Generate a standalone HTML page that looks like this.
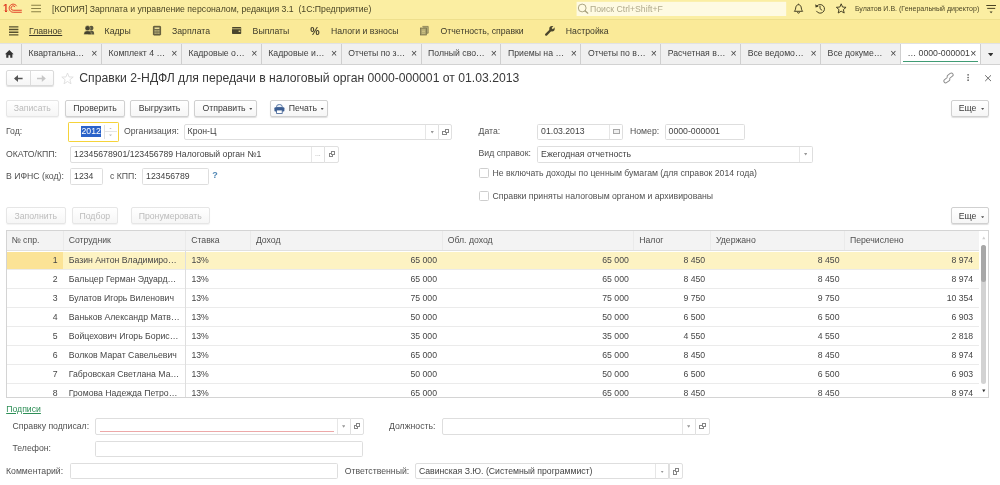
<!DOCTYPE html>
<html lang="ru"><head><meta charset="utf-8"><title>Справки 2-НДФЛ</title>
<style>
*{box-sizing:border-box;margin:0;padding:0}
html,body{width:1000px;height:485px;overflow:hidden;background:#fff}
body{will-change:transform;font-family:"Liberation Sans",Arial,sans-serif;font-size:8.7px;color:#333;position:relative;line-height:1}
.a{position:absolute;white-space:nowrap}
#top{position:absolute;left:0;top:0;width:1000px;height:19.6px;background:#fbeea2;border-bottom:1.5px solid #eedf8c}
#sec{position:absolute;left:0;top:19.6px;width:1000px;height:23.4px;background:#faea98}
#tabs{position:absolute;left:0;top:43px;width:1000px;height:21.5px;background:#f1f1f1;border-top:0.6px solid #e2e2e2;border-bottom:1px solid #d2d2d2}
.tab{position:absolute;top:0;height:20px;border-left:1px solid #cfcfcf;background:#f0f0f0}
.tab .tt{position:absolute;left:6.6px;top:5.2px;font-size:8.7px;color:#404040;white-space:nowrap}
.tab .tx{position:absolute;right:3.4px;top:4.3px;font-size:10.5px;color:#444}
.tab.act{background:#fff}
.tab.act .ul{position:absolute;left:2.2px;right:1.6px;top:17.4px;height:1.1px;background:#409b74}
.tabdiv{position:absolute;top:0;height:20px;border-left:1px solid #cfcfcf}
.st{position:absolute;top:26.7px;font-size:8.7px;color:#3d3a2a;white-space:nowrap}
.btn{position:absolute;height:16.5px;border:1px solid #d0d0d0;border-radius:2px;background:linear-gradient(#fff,#f6f6f6);box-shadow:0 1px 1px rgba(0,0,0,.13);font-size:8.7px;color:#3a3a3a;text-align:center;line-height:15.9px;white-space:nowrap}
.btn.dis{color:#bcbcbc;border-color:#e6e6e6;box-shadow:0 1px 1px rgba(0,0,0,.05)}
.lbl{position:absolute;font-size:8.7px;color:#505050;white-space:nowrap}
.inp{position:absolute;height:16.3px;border:1px solid #dedede;border-radius:1.6px;background:#fff;font-size:8.7px;color:#424242;line-height:14.3px;padding-left:3.1px;white-space:nowrap;overflow:hidden}
.inp .dd{position:absolute;right:0;top:0;bottom:0;width:12.8px;border-left:1px solid #e6e6e6}
.inp .dd:after{content:"";position:absolute;left:4.3px;top:6.3px;width:3.4px;height:2.5px;background:#979797;clip-path:polygon(0 0,100% 0,50% 100%)}
.ob{position:absolute;width:14.6px;height:16.3px;border:1px solid #e0e0e0;border-radius:0 2px 2px 0;background:#fff}
.ob:before{content:"";position:absolute;left:3.3px;top:6.2px;width:2.3px;height:2.1px;border:0.8px solid #858585;background:#fff}
.ob:after{content:"";position:absolute;left:5.5px;top:4.1px;width:2.3px;height:2.1px;border:0.8px solid #858585;background:#fff}
.cb{position:absolute;width:10px;height:10px;border:1px solid #cecece;border-radius:1.5px;background:#fff}
#tbl{position:absolute;left:6px;top:230px;width:982.9px;height:167.5px;border:1px solid #d4d4d4;background:#fff}
#clip{position:absolute;left:0;top:0;width:1000px;height:397px;overflow:hidden}
#th{position:absolute;left:7px;top:231px;width:972px;height:19.6px;background:#f3f3f3;border-bottom:1px solid #e0e0e0}
#th span{position:absolute;top:0;height:19px;border-left:1px solid #eaeaea;padding-left:4.9px;line-height:19.5px;color:#505050;font-size:8.7px;white-space:nowrap}
.row{position:absolute;left:7px;width:972px;height:18.95px;border-bottom:1px solid #ebebeb}
.row .hl{position:absolute;left:0;top:1.2px;width:972px;bottom:-0.3px;background:#fdf3c3}
.row .cur{position:absolute;left:0;top:1.2px;width:56px;bottom:-0.3px;background:#fbe396}
.c{position:absolute;top:0.2px;height:18.95px;line-height:19.4px;white-space:nowrap;color:#464646}
.c.r{text-align:right}
#vl{position:absolute;left:185px;top:251px;width:1px;height:146px;background:#dedede}
#sb{position:absolute;left:979px;top:231px;width:8.8px;height:166px;background:#fff}
#sb i{position:absolute;left:1.8px;top:13.5px;width:5.4px;height:139.5px;background:#d2d2d2;border-radius:2.7px}
#sb u{position:absolute;left:1.8px;top:13.5px;width:5.4px;height:37px;background:#a8a8a8;border-radius:2.7px}
.ar{display:inline-block;width:3.2px;height:2px;background:#555;clip-path:polygon(0 0,100% 0,50% 100%);vertical-align:0.9px;margin-left:2.2px}
.inp .dd.cal:after{clip-path:none;border:0.7px solid #a8a8a8;width:4.7px;height:3.7px;left:3.3px;top:3.9px;border-top-width:1.5px;background:#f0f0f0}
.inp .dd.dots:after{clip-path:none;background:none;width:auto;height:auto;content:"...";font-size:7px;color:#aaa;left:3px;top:0px;line-height:14px}
.inp .red{position:absolute;left:4px;right:16px;bottom:2.2px;border-bottom:1px solid #eda8a8}
.sa{position:absolute;left:2.5px;width:0;height:0;border:2px solid transparent}
.inp.r1{height:16.1px;line-height:13.5px}
.inp.r2{height:17px;line-height:15.2px}
.inp.j{border-radius:2px 0 0 2px}
.r4{height:16.9px !important}
.r6{height:15.9px !important}
.btn.t{height:17px;line-height:16.6px}

</style></head><body>
<div id="top"></div>
<div id="sec"></div>
<svg class="a" style="left:0;top:0" width="1000" height="43" viewBox="0 0 1000 43">
 <!-- logo -->
 <path d="M16.7 6.19A4.04 4.04 0 1 0 13.2 12.25H21.8" fill="none" stroke="#e03a22" stroke-width="0.95"/>
 <path d="M15.1 6.95A2.2 2.2 0 1 0 13.2 10.25H21.8" fill="none" stroke="#e03a22" stroke-width="0.95"/>
 <!-- hamburger -->
 <path d="M31.2 5.3H41M31.2 8.5H41M31.2 11.7H41" stroke="#8a8146" stroke-width="1.1"/>
 <!-- search -->
 <rect x="576.6" y="1.8" width="209.6" height="14.2" fill="#fefae2"/>
 <circle cx="582.2" cy="8" r="3.9" fill="none" stroke="#a39c78" stroke-width="0.9"/>
 <path d="M585 10.8L587.8 13.2" stroke="#a39c78" stroke-width="1.2" stroke-linecap="round"/>
 <!-- bell -->
 <path d="M794.3 11.3C795.7 10.2 795.5 8.2 795.9 6.9C796.4 5.3 797.3 4.7 798.5 4.7C799.7 4.7 800.6 5.3 801.1 6.9C801.5 8.2 801.3 10.2 802.7 11.3Z" fill="none" stroke="#3f3a20" stroke-width="0.95" stroke-linejoin="round"/>
 <path d="M797.5 12.2a1 1 0 0 0 2 0M798.5 3.7V4.7" fill="none" stroke="#3f3a20" stroke-width="0.95"/>
 <!-- history -->
 <path d="M816.9 6.1A4.3 4.3 0 1 1 816.4 10.9" fill="none" stroke="#3f3a20" stroke-width="0.95"/>
 <path d="M815.2 4.3L815.6 7.4L818.6 6.6Z" fill="#3f3a20"/>
 <path d="M820 5.8V8.6L822.2 10.4" fill="none" stroke="#3f3a20" stroke-width="0.95"/>
 <!-- star -->
 <path d="M841.20 3.80L842.55 7.04L846.05 7.32L843.39 9.61L844.20 13.03L841.20 11.20L838.20 13.03L839.01 9.61L836.35 7.32L839.85 7.04Z" fill="none" stroke="#3f3a20" stroke-width="0.95" stroke-linejoin="round"/>
 <!-- menu -->
 <path d="M986.3 5.5H996M987.2 8.4H995.2" stroke="#4a4424" stroke-width="1"/>
 <path d="M989.6 11.4H992.6L991.1 13.2Z" fill="#3f3a20"/>
 <!-- section: main -->
 <path d="M9 26.8H18.4M9 29.5H18.4M9 32.2H18.4M9 34.9H18.4" stroke="#57512f" stroke-width="1.35"/>
 <!-- people -->
 <circle cx="91.2" cy="28" r="2.3" fill="#5a563e"/>
 <path d="M88.2 34.4C88.2 31.6 89.4 30.6 91.2 30.6C93 30.6 94.2 31.6 94.2 34.4Z" fill="#5a563e"/>
 <circle cx="87.6" cy="28.2" r="2.6" fill="#45422f" stroke="#faea98" stroke-width="0.5"/>
 <path d="M83.8 34.6C83.8 31.8 85.2 30.8 87.6 30.8C90 30.8 91.4 31.8 91.4 34.6Z" fill="#45422f" stroke="#faea98" stroke-width="0.4"/>
 <!-- calculator -->
 <rect x="153.4" y="26.3" width="7.2" height="8.8" rx="0.6" fill="#6d6849" stroke="#4f4a2f" stroke-width="0.8"/>
 <rect x="154.6" y="27.5" width="4.8" height="1.5" fill="#e9dc95"/>
 <path d="M154.6 30.4H159.4M154.6 31.9H159.4M154.6 33.4H159.4" stroke="#e9dc95" stroke-width="0.8" stroke-dasharray="1.1 0.75"/>
 <!-- wallet -->
 <rect x="232" y="27" width="9.2" height="7" rx="0.7" fill="#4a452c"/>
 <rect x="232" y="28.4" width="9.2" height="0.8" fill="#d9cc85"/>
 <rect x="238.6" y="30.6" width="1.7" height="1.4" fill="#d9cc85"/>
 <!-- docs -->
 <path d="M422.4 26.4H428.2V33.2H426.6" fill="#b9b07a" stroke="#77704a" stroke-width="0.7"/>
 <rect x="420.4" y="28" width="6" height="7" fill="#a8a06c" stroke="#6f6944" stroke-width="0.7"/>
 <path d="M422 30H425M422 31.6H425M422 33.2H425" stroke="#e9dc95" stroke-width="0.6"/>
 <!-- wrench -->
 <path d="M546.2 34.6L551 29.8" stroke="#4a452c" stroke-width="2.3" stroke-linecap="round"/>
 <circle cx="552" cy="28.8" r="2.7" fill="#4a452c"/>
 <path d="M552.2 28.6L554.6 26.2" stroke="#faea98" stroke-width="1.7"/>
</svg>
 <div class="a" style="left:2.9px;top:2.8px;font-size:11.8px;font-weight:bold;color:#e03a22;line-height:1;transform:scaleX(0.82);transform-origin:0 0">1</div><div class="a" style="left:1.5px;top:10.6px;width:3.35px;height:3px;background:#fbeea2"></div><div class="a" style="left:6.9px;top:10.6px;width:1.6px;height:3px;background:#fbeea2"></div>
 <div class="a" style="left:52px;top:4.8px;font-size:8.7px;color:#4a4526">[КОПИЯ] Зарплата и управление персоналом, редакция 3.1&nbsp; (1С:Предприятие)</div>
 <div class="a" style="left:590px;top:4.6px;font-size:8.7px;color:#b0aa8c">Поиск Ctrl+Shift+F</div>
 <div class="a" style="left:854.9px;top:5.2px;font-size:7.05px;color:#4f4928">Булатов И.В. (Генеральный директор)</div>
 <div class="st" style="left:29px;text-decoration:underline">Главное</div>
 <div class="st" style="left:104.6px">Кадры</div>
 <div class="st" style="left:172px">Зарплата</div>
 <div class="st" style="left:252.6px">Выплаты</div>
 <div class="a" style="left:310.2px;top:26px;font-size:10.6px;font-weight:bold;color:#45402a">%</div>
 <div class="st" style="left:331px">Налоги и взносы</div>
 <div class="st" style="left:440.6px">Отчетность, справки</div>
 <div class="st" style="left:565.8px">Настройка</div>
<div id="tabs">
 <svg class="a" style="left:4.7px;top:6px" width="9" height="8.1" viewBox="0 0 10 9"><path d="M0 4.6L4.8 0L9.6 4.6H8.2V8.6H5.8V5.8H3.8V8.6H1.4V4.6Z" fill="#333"/></svg>
<div class="tab" style="left:21.0px;width:79.9px"><span class="tt">Квартальна…</span><span class="tx">×</span></div>
<div class="tab" style="left:100.9px;width:79.9px"><span class="tt">Комплект 4 …</span><span class="tx">×</span></div>
<div class="tab" style="left:180.8px;width:79.9px"><span class="tt">Кадровые о…</span><span class="tx">×</span></div>
<div class="tab" style="left:260.7px;width:79.9px"><span class="tt">Кадровые и…</span><span class="tx">×</span></div>
<div class="tab" style="left:340.6px;width:79.9px"><span class="tt">Отчеты по з…</span><span class="tx">×</span></div>
<div class="tab" style="left:420.5px;width:79.9px"><span class="tt">Полный сво…</span><span class="tx">×</span></div>
<div class="tab" style="left:500.4px;width:79.9px"><span class="tt">Приемы на …</span><span class="tx">×</span></div>
<div class="tab" style="left:580.3px;width:79.9px"><span class="tt">Отчеты по в…</span><span class="tx">×</span></div>
<div class="tab" style="left:660.2px;width:79.9px"><span class="tt">Расчетная в…</span><span class="tx">×</span></div>
<div class="tab" style="left:740.1px;width:79.9px"><span class="tt">Все ведомо…</span><span class="tx">×</span></div>
<div class="tab" style="left:820.0px;width:79.9px"><span class="tt">Все докуме…</span><span class="tx">×</span></div>
<div class="tab act" style="left:899.9px;width:79.9px"><span class="tt">… 0000-000001</span><span class="tx">×</span><i class="ul"></i></div>
<div class="tabdiv" style="left:979.8px"></div>
 <div class="a" style="left:988px;top:9px;width:5.4px;height:3.4px;background:#333;clip-path:polygon(0 0,100% 0,50% 100%)"></div>
</div>

<!-- form header -->
<div class="btn" style="left:6px;top:70.4px;width:47.5px;height:15.6px;border-color:#dadada"></div>
<div class="a" style="left:30px;top:71.4px;width:1px;height:13.6px;background:#dcdcdc"></div>
<svg class="a" style="left:13px;top:73.6px" width="11" height="9" viewBox="0 0 11 9"><path d="M9.6 4.5H2" stroke="#555" stroke-width="1.5"/><path d="M5 1L1 4.5L5 8Z" fill="#555"/></svg>
<svg class="a" style="left:36px;top:73.6px" width="11" height="9" viewBox="0 0 11 9"><path d="M1 4.5H8.6" stroke="#c6c6c6" stroke-width="1.5"/><path d="M5.8 1L9.8 4.5L5.8 8Z" fill="#c6c6c6"/></svg>
<svg class="a" style="left:60.5px;top:72px" width="13" height="13" viewBox="0 0 13 13"><path d="M6.5 1L8 4.9L12.2 5.1L8.9 7.7L10 11.8L6.5 9.5L3 11.8L4.1 7.7L0.8 5.1L5 4.9Z" fill="#fff" stroke="#dedede" stroke-width="0.9" stroke-linejoin="round"/></svg>
<div class="a" style="left:79.3px;top:72.1px;font-size:12.2px;color:#383838">Справки 2-НДФЛ для передачи в налоговый орган 0000-000001 от 01.03.2013</div>
<svg class="a" style="left:942px;top:72px" width="13" height="12" viewBox="942 72 13 12"><g transform="translate(948.5 77.9) rotate(-37)" fill="none" stroke="#8c8c8c" stroke-width="0.95"><path d="M1 1H4.1A1.8 1.8 0 0 0 4.1 -2.6H1.3A1.8 1.8 0 0 0 -0.5 -0.8"/><path d="M-1 -1H-4.1A1.8 1.8 0 0 0 -4.1 2.6H-1.3A1.8 1.8 0 0 0 0.5 0.8"/></g></svg>
<svg class="a" style="left:966.3px;top:73px" width="3.6" height="10" viewBox="0 0 3 10"><circle cx="1.8" cy="1.8" r="0.85" fill="#666"/><circle cx="1.8" cy="4.5" r="0.85" fill="#666"/><circle cx="1.8" cy="7.2" r="0.85" fill="#666"/></svg>
<svg class="a" style="left:984px;top:74px" width="9" height="9" viewBox="0 0 9 9"><path d="M1.2 1.3L7 7.1M7 1.3L1.2 7.1" stroke="#6a6a6a" stroke-width="1"/></svg>

<!-- command bar -->
<div class="btn dis" style="left:6px;top:100px;width:52.5px">Записать</div>
<div class="btn" style="left:65px;top:100px;width:60px">Проверить</div>
<div class="btn" style="left:129.8px;top:100px;width:59.4px">Выгрузить</div>
<div class="btn" style="left:194px;top:100px;width:63px;padding-left:4px">Отправить <b class="ar" style="margin-left:1.2px"></b></div>
<div class="btn" style="left:269.8px;top:100px;width:58.2px;padding-left:14.6px">Печать<b class="ar" style="margin-left:3.4px"></b></div>
<svg class="a" style="left:273.8px;top:103.6px" width="11" height="10" viewBox="0 0 11 10"><path d="M2.6 3.6V2.4Q2.6 0.5 5.4 0.5Q8.2 0.5 8.2 2.4V3.6Z" fill="#e8eef6" stroke="#3b5d92" stroke-width="0.8"/><rect x="0.4" y="3.2" width="10" height="4.4" rx="1" fill="#3b5d92"/><rect x="2.6" y="6" width="5.6" height="3.4" fill="#fff" stroke="#3b5d92" stroke-width="0.8"/></svg>
<div class="btn" style="left:951px;top:100px;width:38px;padding-left:3px">Еще <b class="ar"></b></div>

<!-- row 1 -->
<div class="lbl" style="left:6px;top:127.1px">Год:</div>
<div class="a" style="left:68px;top:122px;width:50.8px;height:19.8px;border:1.5px solid #f5d33a;border-radius:1.2px;background:#fff"></div>
<div class="a" style="left:81.2px;top:126px;width:19.8px;height:11.4px;background:#2a62c9"></div>
<div class="a" style="left:81.5px;top:127.2px;font-size:8.7px;color:#fff">2012</div>
<div class="a" style="left:103.5px;top:125px;width:1px;height:14px;background:#e2e2e2"></div>
<div class="a" style="left:104.5px;top:131.2px;width:12.5px;height:0.8px;background:#e4e4e4"></div>
<div class="a" style="left:109px;top:127.6px;width:3px;height:1.8px;background:#bdbdbd;clip-path:polygon(0 100%,100% 100%,50% 0)"></div>
<div class="a" style="left:109px;top:134.4px;width:3px;height:1.8px;background:#bdbdbd;clip-path:polygon(0 0,100% 0,50% 100%)"></div>
<div class="lbl" style="left:124px;top:126.9px">Организация:</div>
<div class="inp r1 j" style="left:183.5px;top:123.8px;width:255.5px">Крон-Ц<i class="dd"></i></div>
<div class="ob" style="left:438px;top:123.8px;height:16.1px;width:13.8px"></div>
<div class="lbl" style="left:478.5px;top:127.1px">Дата:</div>
<div class="inp r1" style="left:537px;top:123.8px;width:85.5px">01.03.2013<i class="dd cal"></i></div>
<div class="lbl" style="left:630px;top:127.1px">Номер:</div>
<div class="inp r1" style="left:664.5px;top:123.8px;width:80px">0000-000001</div>

<!-- row 2 -->
<div class="lbl" style="left:6px;top:150px">ОКАТО/КПП:</div>
<div class="inp r2 j" style="left:70px;top:145.8px;width:255px">12345678901/123456789 Налоговый орган №1<i class="dd dots"></i></div>
<div class="ob" style="left:324.3px;top:145.8px;height:17px"></div>
<div class="lbl" style="left:478.5px;top:149.3px">Вид справок:</div>
<div class="inp r2" style="left:537px;top:145.8px;width:275.5px">Ежегодная отчетность<i class="dd"></i></div>

<!-- row 3 -->
<div class="lbl" style="left:6px;top:172px">В ИФНС (код):</div>
<div class="inp r2" style="left:70px;top:167.8px;width:33px">1234</div>
<div class="lbl" style="left:110px;top:172px">с КПП:</div>
<div class="inp r2" style="left:142px;top:167.8px;width:66.5px">123456789</div>
<div class="lbl" style="left:212.2px;top:171.3px;color:#4f86b4;font-weight:bold;font-size:9px">?</div>
<div class="cb" style="left:479px;top:168.3px"></div>
<div class="lbl" style="left:492.5px;top:168.6px">Не включать доходы по ценным бумагам (для справок 2014 года)</div>
<div class="cb" style="left:479px;top:191px"></div>
<div class="lbl" style="left:492.5px;top:191.7px">Справки приняты налоговым органом и архивированы</div>

<!-- table cmd bar -->
<div class="btn dis t" style="left:6px;top:207.1px;width:59.5px">Заполнить</div>
<div class="btn dis t" style="left:71.5px;top:207.1px;width:46.5px">Подбор</div>
<div class="btn dis t" style="left:130.5px;top:207.1px;width:79.5px">Пронумеровать</div>
<div class="btn t" style="left:951px;top:207.1px;width:38px;padding-left:3px">Еще <b class="ar"></b></div>

<div id="tbl"></div>
<div id="clip">
 <div id="th">
  <span style="left:-1px;border-left:0;padding-left:5.4px">№ спр.</span>
  <span style="left:55.8px">Сотрудник</span>
  <span style="left:178.3px">Ставка</span>
  <span style="left:243px">Доход</span>
  <span style="left:434.8px">Обл. доход</span>
  <span style="left:626.3px">Налог</span>
  <span style="left:703px">Удержано</span>
  <span style="left:837px">Перечислено</span>
 </div>
<div class="row sel" style="top:250.90px"><i class="hl"></i><i class="cur"></i><span class="c r" style="right:921.3px">1</span><span class="c" style="left:61.8px">Базин Антон Владимиро…</span><span class="c" style="left:184.4px">13%</span><span class="c r" style="right:542.0px">65 000</span><span class="c r" style="right:350.2px">65 000</span><span class="c r" style="right:273.8px">8 450</span><span class="c r" style="right:139.5px">8 450</span><span class="c r" style="right:5.8px">8 974</span></div>
<div class="row" style="top:269.85px"><span class="c r" style="right:921.3px">2</span><span class="c" style="left:61.8px">Бальцер Герман Эдуард…</span><span class="c" style="left:184.4px">13%</span><span class="c r" style="right:542.0px">65 000</span><span class="c r" style="right:350.2px">65 000</span><span class="c r" style="right:273.8px">8 450</span><span class="c r" style="right:139.5px">8 450</span><span class="c r" style="right:5.8px">8 974</span></div>
<div class="row" style="top:288.80px"><span class="c r" style="right:921.3px">3</span><span class="c" style="left:61.8px">Булатов Игорь Виленович</span><span class="c" style="left:184.4px">13%</span><span class="c r" style="right:542.0px">75 000</span><span class="c r" style="right:350.2px">75 000</span><span class="c r" style="right:273.8px">9 750</span><span class="c r" style="right:139.5px">9 750</span><span class="c r" style="right:5.8px">10 354</span></div>
<div class="row" style="top:307.75px"><span class="c r" style="right:921.3px">4</span><span class="c" style="left:61.8px">Ваньков Александр Матв…</span><span class="c" style="left:184.4px">13%</span><span class="c r" style="right:542.0px">50 000</span><span class="c r" style="right:350.2px">50 000</span><span class="c r" style="right:273.8px">6 500</span><span class="c r" style="right:139.5px">6 500</span><span class="c r" style="right:5.8px">6 903</span></div>
<div class="row" style="top:326.70px"><span class="c r" style="right:921.3px">5</span><span class="c" style="left:61.8px">Войцехович Игорь Борис…</span><span class="c" style="left:184.4px">13%</span><span class="c r" style="right:542.0px">35 000</span><span class="c r" style="right:350.2px">35 000</span><span class="c r" style="right:273.8px">4 550</span><span class="c r" style="right:139.5px">4 550</span><span class="c r" style="right:5.8px">2 818</span></div>
<div class="row" style="top:345.65px"><span class="c r" style="right:921.3px">6</span><span class="c" style="left:61.8px">Волков Марат Савельевич</span><span class="c" style="left:184.4px">13%</span><span class="c r" style="right:542.0px">65 000</span><span class="c r" style="right:350.2px">65 000</span><span class="c r" style="right:273.8px">8 450</span><span class="c r" style="right:139.5px">8 450</span><span class="c r" style="right:5.8px">8 974</span></div>
<div class="row" style="top:364.60px"><span class="c r" style="right:921.3px">7</span><span class="c" style="left:61.8px">Габровская Светлана Ма…</span><span class="c" style="left:184.4px">13%</span><span class="c r" style="right:542.0px">50 000</span><span class="c r" style="right:350.2px">50 000</span><span class="c r" style="right:273.8px">6 500</span><span class="c r" style="right:139.5px">6 500</span><span class="c r" style="right:5.8px">6 903</span></div>
<div class="row" style="top:383.55px"><span class="c r" style="right:921.3px">8</span><span class="c" style="left:61.8px">Громова Надежда Петро…</span><span class="c" style="left:184.4px">13%</span><span class="c r" style="right:542.0px">65 000</span><span class="c r" style="right:350.2px">65 000</span><span class="c r" style="right:273.8px">8 450</span><span class="c r" style="right:139.5px">8 450</span><span class="c r" style="right:5.8px">8 974</span></div>

 <div id="vl"></div>
 <div id="sb"><svg class="a" style="left:2.6px;top:4.6px" width="4" height="4" viewBox="0 0 4 4"><path d="M0.2 3.2H3.4L1.8 0.5Z" fill="#cfcfcf"/></svg><i></i><u></u><svg class="a" style="left:2.6px;top:157.6px" width="4" height="4" viewBox="0 0 4 4"><path d="M0.2 0.5H3.4L1.8 3.2Z" fill="#333"/></svg></div>
</div>

<div class="lbl" style="left:6.2px;top:405px;color:#2e8f57;text-decoration:underline">Подписи</div>
<div class="lbl" style="left:12.5px;top:421.6px">Справку подписал:</div>
<div class="inp j r4" style="left:95px;top:418px;width:255.5px"><i class="dd"></i><i class="red"></i></div>
<div class="ob r4" style="left:349.5px;top:418px"></div>
<div class="lbl" style="left:389px;top:421.6px">Должность:</div>
<div class="inp j r4" style="left:441.5px;top:418px;width:254px"><i class="dd"></i></div>
<div class="ob r4" style="left:695px;top:418px"></div>
<div class="lbl" style="left:12.5px;top:444px">Телефон:</div>
<div class="inp" style="left:95px;top:440.6px;width:267.9px"></div>
<div class="lbl" style="left:6px;top:467px">Комментарий:</div>
<div class="inp r6" style="left:70px;top:463.3px;width:267.5px"></div>
<div class="lbl" style="left:344.7px;top:467px">Ответственный:</div>
<div class="inp j r6" style="left:414.8px;top:463.3px;width:254.2px">Савинская З.Ю. (Системный программист)<i class="dd"></i></div>
<div class="ob r6" style="left:668.5px;top:463.3px"></div>
</body></html>
